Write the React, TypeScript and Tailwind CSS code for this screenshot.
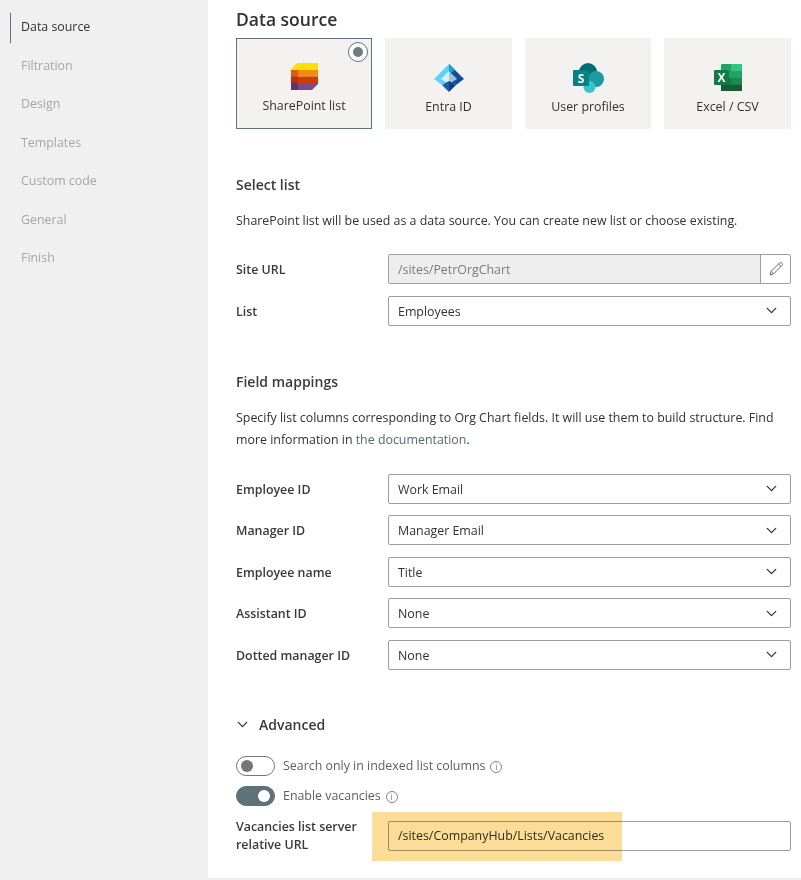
import { ChevronDown } from "lucide-react";

const font = "font-['Open_Sans','Noto_Sans',sans-serif]";

const navItems = ["Data source", "Filtration", "Design", "Templates", "Custom code", "General", "Finish"];

function ListsIcon() {
    return (
        <svg width="27" height="28" viewBox="0 0 27 28" className="block">
            <path d="M6 0h21v7H0V6z" fill="#ffdf00" />
            <rect x="0" y="7" width="27" height="6.5" fill="#f08c10" />
            <rect x="0" y="13.5" width="27" height="6.5" fill="#d13c00" />
            <path d="M0 20h27v1l-6 6H0z" fill="#7c4a88" />
            <rect x="0" y="7" width="7" height="6.5" fill="#e25a0c" />
            <rect x="0" y="13.5" width="7" height="6.5" fill="#b5330a" />
            <rect x="0" y="20" width="7" height="7" fill="#5e3470" />
        </svg>
    );
}

function EntraIcon() {
    return (
        <svg width="30" height="28" viewBox="0 0 30 28" className="block">
            <path d="M15 0L0 15l8 6 7-4z" fill="#5fd0fb" />
            <path d="M15 0l15 15-8 6-7-4z" fill="#0f4da0" />
            <path d="M15 0l6 6-6 4z" fill="#1a9be8" />
            <path d="M15 7L7 15l8 5z" fill="#d5f3fb" />
            <path d="M15 7l8 8-8 5z" fill="#9cc5c9" />
            <path d="M8 21l7-4v11z" fill="#1b5ca8" />
            <path d="M22 21l-7-4v11z" fill="#0c3f8c" />
        </svg>
    );
}

function SharePointIcon() {
    return (
        <svg width="31" height="30" viewBox="0 0 31 30" className="block">
            <circle cx="15" cy="9" r="9" fill="#036c70" />
            <circle cx="23" cy="16" r="8" fill="#1a9ba1" />
            <circle cx="16.5" cy="24" r="6" fill="#37c6d0" />
            <rect x="0" y="7" width="16" height="16" rx="1" fill="#038387" />
            <text x="8" y="20" textAnchor="middle" fontSize="12" fontWeight="700" fill="#fff" fontFamily="'Open Sans',sans-serif">S</text>
        </svg>
    );
}

function ExcelIcon() {
    return (
        <svg width="28" height="27" viewBox="0 0 28 27" className="block">
            <rect x="7" y="0" width="21" height="27" rx="1" fill="#21a366" />
            <rect x="17" y="0" width="11" height="7" fill="#33c481" />
            <rect x="7" y="14" width="10" height="6.5" fill="#107c41" />
            <rect x="17" y="14" width="11" height="6.5" fill="#1b8a50" />
            <rect x="7" y="20.5" width="21" height="6.5" fill="#185c37" />
            <rect x="0" y="6" width="15" height="15" rx="1" fill="#107c41" />
            <text x="7.5" y="18" textAnchor="middle" fontSize="12" fontWeight="700" fill="#fff" fontFamily="'Open Sans',sans-serif">X</text>
        </svg>
    );
}

function Tile({ label, icon, selected }: { label: string; icon: React.ReactNode; selected?: boolean }) {
    return (
        <div
            className={`relative h-[91px] bg-[#f3f2f1] flex flex-col items-center justify-end pb-[13px] ${
                selected ? "border border-[#5f7278]" : ""
            }`}
        >
            {selected && (
                <span className="absolute top-[3px] right-[3px] w-[20px] h-[20px] rounded-full border border-[#5f7278] bg-white flex items-center justify-center">
                    <span className="w-[10px] h-[10px] rounded-full bg-[#6b7c82]" />
                </span>
            )}
            <div className="h-[31px] mb-[5px] flex items-center justify-center">{icon}</div>
            <span className="text-[12.4px] leading-[18px] text-[#323130]">{label}</span>
        </div>
    );
}

function Select({ value }: { value: string }) {
    return (
        <div className="flex-1 h-[30px] border border-[#a19f9d] rounded-[2px] bg-white flex items-center justify-between pl-[9px] pr-[10px]">
            <span className="pt-[3px] text-[12.4px] text-[#323130]">{value}</span>
            <ChevronDown size={17} strokeWidth={1.8} className="text-[#323130]" />
        </div>
    );
}

function Row({ label, children }: { label: string; children: React.ReactNode }) {
    return (
        <div className="flex items-center h-[30px]">
            <div className="w-[152px] pt-[3px] text-[12.4px] font-semibold text-[#3b3a39]">{label}</div>
            {children}
        </div>
    );
}

function Toggle({ on, label }: { on?: boolean; label: string }) {
    return (
        <div className="flex items-center h-[20px]">
            <span
                className={`w-[39px] h-[20px] rounded-full flex items-center px-[4px] border ${
                    on ? "bg-[#5f7278] border-[#5f7278] justify-end" : "bg-white border-[#767676] justify-start"
                }`}
            >
                <span className={`w-[12px] h-[12px] rounded-full ${on ? "bg-white" : "bg-[#767676]"}`} />
            </span>
            <span className="ml-[8px] pt-[2px] text-[12.4px] text-[#605e5c]">{label}</span>
            <span className="ml-[5px] mt-[2px] w-[12px] h-[12px] rounded-full border border-[#7a8a8f] text-[#7a8a8f] flex items-center justify-center text-[9px] leading-none">
                i
            </span>
        </div>
    );
}

export default function App() {
    return (
        <div className={`w-[801px] h-[880px] bg-white flex overflow-hidden ${font}`}>
            <aside className="w-[208px] h-full bg-[#f0f0f0] pt-[12.5px] pl-[10px] shrink-0">
                {navItems.map((item, i) => (
                    <div
                        key={item}
                        className={`h-[30px] mb-[8.5px] flex items-center text-[12.4px] ${
                            i === 0 ? "pl-[10px] border-l border-[#5f7278] text-[#323130]" : "pl-[11px] text-[#a6a6a6]"
                        }`}
                    >
                        {item}
                    </div>
                ))}
            </aside>
            <main className="flex-1 flex flex-col pl-[28px] pr-[10px] border-b-2 border-[#eeeeee]">
                <h1 className="h-[38px] pt-[6px] text-[17.5px] leading-[27px] font-semibold text-[#323130]">Data source</h1>
                <div className="grid grid-cols-[136px_127px_126px_127px] gap-[13px]">
                    <Tile label="SharePoint list" icon={<ListsIcon />} selected />
                    <Tile label="Entra ID" icon={<EntraIcon />} />
                    <Tile label="User profiles" icon={<SharePointIcon />} />
                    <Tile label="Excel / CSV" icon={<ExcelIcon />} />
                </div>

                <h2 className="mt-[45px] text-[14px] leading-[22px] font-semibold text-[#3b3a39]">Select list</h2>
                <p className="mt-[14px] text-[12.4px] leading-[22px] text-[#323130]">
                    SharePoint list will be used as a data source. You can create new list or choose existing.
                </p>
                <div className="mt-[22px] flex flex-col gap-[11.5px]">
                    <Row label="Site URL">
                        <div className="flex-1 h-[30px] flex border border-[#a19f9d] rounded-[2px]">
                            <div className="flex-1 bg-[#eeeeee] pl-[9px] pt-[2px] flex items-center text-[12.4px] text-[#7a7a7a] border-r border-[#a19f9d]">
                                /sites/PetrOrgChart
                            </div>
                            <div className="w-[29px] flex items-center justify-center">
                                <svg width="14" height="14" viewBox="0 0 14 14" fill="none" stroke="#605e5c" strokeWidth="0.9">
                                    <path d="M1 13l1-3.6L10.6 1a1.4 1.4 0 0 1 2 0l.4.4a1.4 1.4 0 0 1 0 2L4.4 12z" />
                                    <path d="M2 9.4L4.6 12M9.6 2l2.4 2.4" />
                                </svg>
                            </div>
                        </div>
                    </Row>
                    <Row label="List">
                        <Select value="Employees" />
                    </Row>
                </div>

                <h2 className="mt-[45px] text-[14px] leading-[22px] font-semibold text-[#3b3a39]">Field mappings</h2>
                <p className="mt-[14px] text-[12.4px] leading-[22px] text-[#323130]">
                    Specify list columns corresponding to Org Chart fields. It will use them to build structure. Find more information in{" "}
                    <span className="text-[#4f6b73]">the documentation</span>.
                </p>
                <div className="mt-[23px] flex flex-col gap-[11.5px]">
                    <Row label="Employee ID">
                        <Select value="Work Email" />
                    </Row>
                    <Row label="Manager ID">
                        <Select value="Manager Email" />
                    </Row>
                    <Row label="Employee name">
                        <Select value="Title" />
                    </Row>
                    <Row label="Assistant ID">
                        <Select value="None" />
                    </Row>
                    <Row label="Dotted manager ID">
                        <Select value="None" />
                    </Row>
                </div>

                <div className="mt-[44px] flex items-center h-[22px]">
                    <ChevronDown size={17} strokeWidth={1.8} className="text-[#323130] -ml-[2px]" />
                    <span className="ml-[8px] text-[14px] font-semibold text-[#3b3a39]">Advanced</span>
                </div>
                <div className="mt-[20px] flex flex-col gap-[10px]">
                    <Toggle label="Search only in indexed list columns" />
                    <Toggle on label="Enable vacancies" />
                </div>
                <div className="mt-[15px] flex items-center h-[30px] relative">
                    <div className="w-[152px] text-[12.4px] leading-[17.5px] font-semibold text-[#3b3a39]">
                        Vacancies list server
                        <br />
                        relative URL
                    </div>
                    <div className="flex-1 h-[30px] border border-[#a19f9d] rounded-[2px] bg-white pl-[9px] pt-[2px] flex items-center text-[12.4px] text-[#323130]">
                        /sites/CompanyHub/Lists/Vacancies
                    </div>
                    <div className="absolute left-[136px] top-[-9px] w-[250px] h-[49px] bg-[#fbdd98] mix-blend-multiply" />
                </div>
            </main>
        </div>
    );
}
